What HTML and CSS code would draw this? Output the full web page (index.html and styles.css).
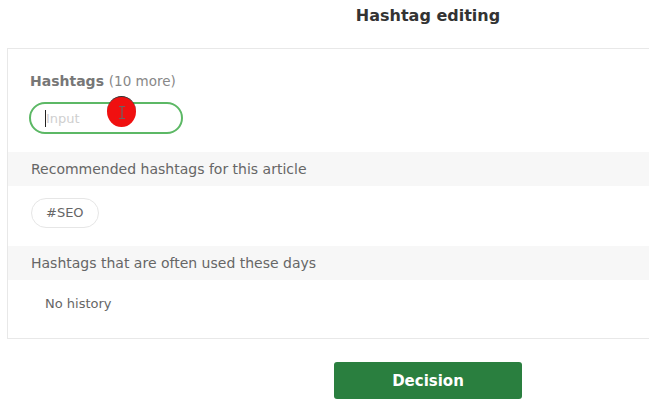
FILE: index.html
```html
<!DOCTYPE html>
<html lang="en">
<head>
  <meta charset="UTF-8" />
  <title>Hashtag editing</title>
  <link rel="stylesheet" href="styles.css">
</head>
<body>
  <div class="page">
    <h1 class="title">Hashtag editing</h1>
    <div class="card">
      <div class="field">
        <div class="field-label">Hashtags <span class="count">(10 more)</span></div>
        <div class="tag-input">
          <span class="caret"></span><span class="placeholder">Input</span>
          <span class="pointer">
            <svg width="8" height="15" viewBox="0 0 8 15"><path d="M1 1.5h6M4 1.5v12M1 13.5h6" stroke="#666" stroke-width="1.2" fill="none"/></svg>
          </span>
        </div>
      </div>
      <div class="band">Recommended hashtags for this article</div>
      <div class="chips">
        <span class="chip">#SEO</span>
      </div>
      <div class="band">Hashtags that are often used these days</div>
      <div class="empty">No history</div>
    </div>
    <div class="actions">
      <button class="btn-decision" type="button">Decision</button>
    </div>
  </div>
</body>
</html>
```
FILE: styles.css
```css
body {
  margin: 0;
  background: #fff;
  font-family: "DejaVu Sans", Verdana, sans-serif;
  color: #666;
  overflow: hidden;
}
.page {
  width: 842px;
  margin-left: 7px;
}
.title {
  margin: 0;
  height: 48px;
  padding-top: 6px;
  box-sizing: border-box;
  text-align: center;
  font-size: 16px;
  font-weight: bold;
  color: #333;
}
.card {
  border: 1px solid #e8e8e8;
  background: #fff;
}
.field {
  padding: 24px 22px 18px;
}
.field-label {
  font-size: 14px;
  font-weight: bold;
  color: #777;
  line-height: 16px;
  margin-bottom: 13px;
}
.field-label .count {
  font-weight: normal;
  font-size: 13.5px;
  color: #888;
}
.tag-input {
  position: relative;
  width: 154px;
  height: 32px;
  box-sizing: border-box;
  border: 2px solid #5cb865;
  border-radius: 16px;
  padding-left: 14px;
  display: flex;
  align-items: center;
  margin-left: -1px;
}
.caret {
  display: inline-block;
  width: 1px;
  height: 17px;
  background: #222;
}
.placeholder {
  font-size: 13px;
  color: #cfcfcf;
}
.pointer {
  position: absolute;
  left: 76px;
  top: -8px;
  width: 29px;
  height: 31px;
  border-radius: 50%;
  background: #f01010;
  border-top: 1px solid #333;
  box-sizing: border-box;
  display: flex;
  align-items: center;
  justify-content: center;
}
.band {
  background: #f7f7f7;
  padding: 0 23px;
  height: 34px;
  line-height: 34px;
  font-size: 14px;
  color: #666;
}
.chips {
  padding: 12px 23px 18px;
}
.chip {
  display: inline-block;
  height: 30px;
  line-height: 28px;
  box-sizing: border-box;
  padding: 0 14px;
  border: 1px solid #e6e6e6;
  border-radius: 15px;
  font-size: 13px;
  color: #666;
}
.empty {
  padding: 16px 37px 26px;
  font-size: 13px;
  line-height: 16px;
  color: #666;
}
.actions {
  padding-top: 23px;
  text-align: center;
}
.btn-decision {
  width: 188px;
  height: 37px;
  border: none;
  border-radius: 3px;
  background: #2a7f3f;
  color: #fff;
  font-family: inherit;
  font-size: 15px;
  font-weight: bold;
}
```
